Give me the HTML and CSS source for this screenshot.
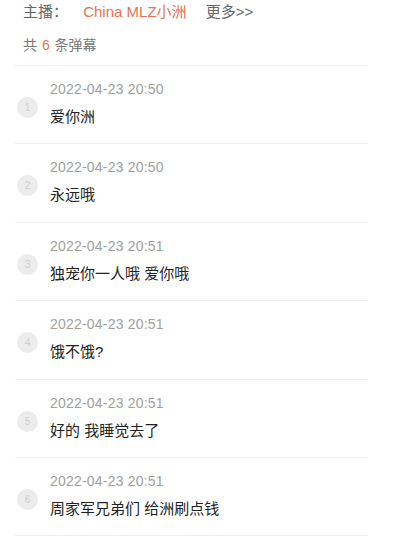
FILE: index.html
```html
<!DOCTYPE html>
<html lang="zh-CN">
  <head>
    <meta charset="UTF-8">
    <title>弹幕列表</title>
    <link rel="stylesheet" href="styles.css">
  </head>
  <body>
    <div class="wrap">
      <div class="head">
        <div class="anchor">
          <span class="label">主播：</span>
          <span class="name">China MLZ小洲</span>
          <span class="more">更多&gt;&gt;</span>
        </div>
        <div class="count">共 <span class="num">6</span> 条弹幕</div>
      </div>

      <ul class="list">
        <li class="item">
          <span class="idx">1</span>
          <div class="body">
            <div class="time">2022-04-23 20:50</div>
            <div class="text">爱你洲</div>
          </div>
        </li>
        <li class="item">
          <span class="idx">2</span>
          <div class="body">
            <div class="time">2022-04-23 20:50</div>
            <div class="text">永远哦</div>
          </div>
        </li>
        <li class="item">
          <span class="idx">3</span>
          <div class="body">
            <div class="time">2022-04-23 20:51</div>
            <div class="text">独宠你一人哦 爱你哦</div>
          </div>
        </li>
        <li class="item">
          <span class="idx">4</span>
          <div class="body">
            <div class="time">2022-04-23 20:51</div>
            <div class="text">饿不饿?</div>
          </div>
        </li>
        <li class="item">
          <span class="idx">5</span>
          <div class="body">
            <div class="time">2022-04-23 20:51</div>
            <div class="text">好的 我睡觉去了</div>
          </div>
        </li>
        <li class="item">
          <span class="idx">6</span>
          <div class="body">
            <div class="time">2022-04-23 20:51</div>
            <div class="text">周家军兄弟们 给洲刷点钱</div>
          </div>
        </li>
      </ul>
    </div>
  </body>
</html>
```

FILE: styles.css
```css
body {
    margin: 0;
    background: white;
    font-family: "Liberation Sans", "Noto Sans CJK SC", sans-serif;
    color: #333;
}
.wrap {
    width: 353px;
    margin-left: 15px;
}
.head {
    padding: 0 0 9px 8px;
    border-bottom: 1px solid #eee;
}
.anchor {
    font-size: 15px;
    line-height: 24px;
    color: #666;
}
.anchor .name {
    color: #e5734d;
    margin-left: 11px;
}
.anchor .more {
    margin-left: 15px;
}
.count {
    margin-top: 10px;
    font-size: 14px;
    line-height: 22px;
    color: #777;
    word-spacing: 1px;
}
.count .num {
    color: #e5734d;
}
.list {
    list-style: none;
    margin: 0;
    padding: 0;
}
.item {
    display: flex;
    align-items: flex-start;
    padding: 14px 0 15.4px;
    border-bottom: 1px solid #f0f0f0;
}
.idx {
    flex: none;
    width: 21px;
    height: 21px;
    margin: 17px 12px 0 2px;
    border-radius: 50%;
    background: #ececec;
    color: #cfcfcf;
    font-size: 10px;
    line-height: 21px;
    text-align: center;
}
.time {
    font-size: 14px;
    line-height: 19px;
    letter-spacing: 0.2px;
    color: #a0a0a0;
}
.text {
    margin-top: 7px;
    font-size: 15px;
    line-height: 22px;
    color: #222;
}
```
